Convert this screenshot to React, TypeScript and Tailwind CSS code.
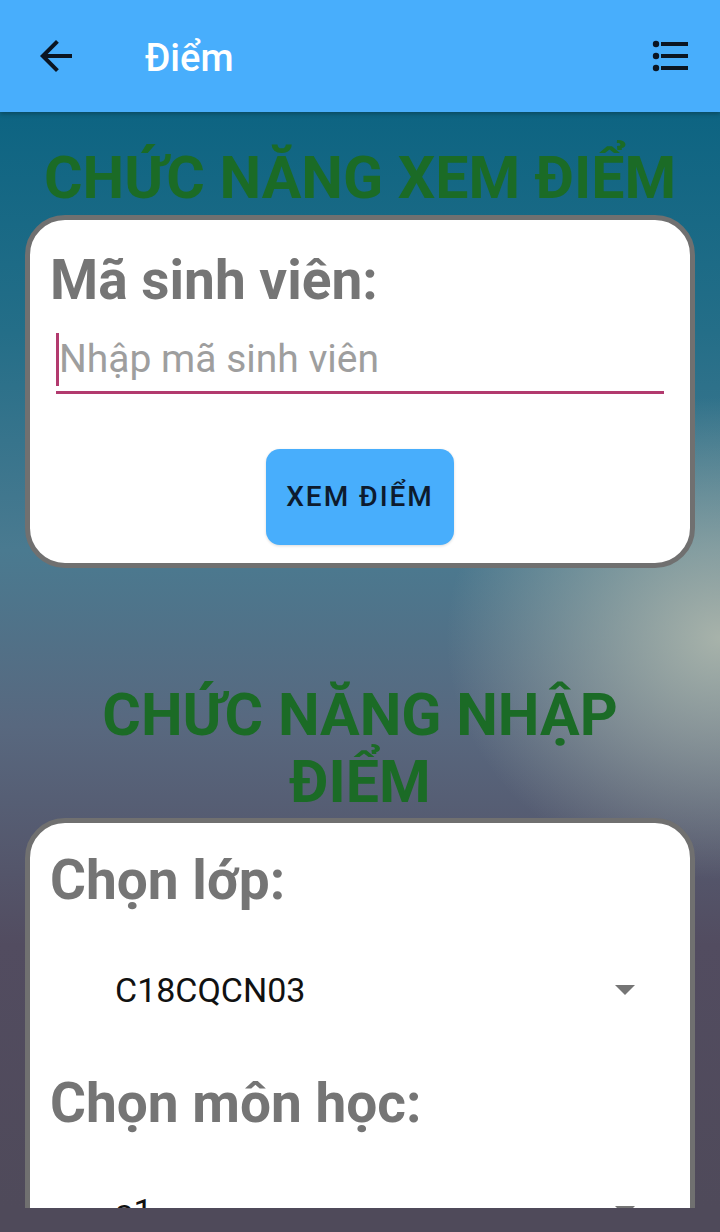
import React from "react";

function BackIcon() {
  return (
    <svg width="48" height="48" viewBox="0 0 24 24" className="text-[#0b1522]">
      <path d="M20 11H7.83l5.59-5.59L12 4l-8 8 8 8 1.41-1.41L7.83 13H20v-2z" fill="currentColor" />
    </svg>
  );
}

function ListIcon() {
  return (
    <svg width="40" height="32" viewBox="0 0 40 32" className="text-[#0b1522]">
      {[4, 16, 28].map((y) => (
        <g key={y}>
          <circle cx="6" cy={y} r="3.2" fill="currentColor" />
          <rect x="11" y={y - 2} width="27" height="4" fill="currentColor" />
        </g>
      ))}
    </svg>
  );
}

function Caret() {
  return (
    <svg width="20" height="10" viewBox="0 0 20 10">
      <path d="M0 0h20L10 10z" fill="#757575" />
    </svg>
  );
}

function SelectRow({ value }: { value: string }) {
  return (
    <div className="flex h-[80px] items-center justify-between pl-[65px] pr-[35px]">
      <span className="text-[34px] leading-none text-[#111111]">{value}</span>
      <Caret />
    </div>
  );
}

export default function App() {
  return (
    <div className="h-[1232px] w-[720px] overflow-hidden bg-[#4f4a5a] font-['Roboto',sans-serif]">
      {/* Toolbar */}
      <div className="relative z-10 flex h-[112px] items-center bg-[#48aefc] shadow-[0_2px_4px_rgba(0,0,0,0.25)]">
        <div className="ml-[32px] flex h-[48px] w-[48px] items-center justify-center">
          <BackIcon />
        </div>
        <h1 className="ml-[65px] mt-[4px] text-[38px] font-medium leading-none text-white">Điểm</h1>
        <div className="ml-auto mr-[30px]">
          <ListIcon />
        </div>
      </div>

      {/* Content */}
      <div className="h-[1096px] overflow-hidden bg-[radial-gradient(ellipse_38%_22%_at_100%_48%,rgba(172,182,172,0.95),rgba(172,182,172,0)_100%),linear-gradient(180deg,#0d6482_0%,#246e88_20%,#4a7a90_40%,#58687f_56%,#524c60_76%,#4f4a5a_100%)] px-[25px] pt-[33px]">
        <h2 className="text-center text-[59px] font-bold leading-[66px] text-[#1b6b26]">
          CHỨC NĂNG XEM ĐIỂM
        </h2>

        <div className="mt-[4px] rounded-[40px] border-[5px] border-[#707070] bg-white px-[20px] pb-[18px] pt-[28px]">
          <p className="text-[55px] font-bold leading-[64px] text-[#757575]">Mã sinh viên:</p>
          <div className="mx-[6px] mt-[21px] border-b-[3px] border-[#b23a6e] pb-[5px]">
            <div className="flex h-[53px] items-center">
              <div className="h-[53px] w-[3px] bg-[#b23a6e]" />
              <span className="text-[39px] leading-[53px] text-[#9e9e9e]">Nhập mã sinh viên</span>
            </div>
          </div>
          <div className="mt-[55px] flex justify-center">
            <button className="h-[96px] w-[188px] rounded-[14px] bg-[#48aefc] text-[28px] font-medium tracking-[0.07em] text-[#0d1b2e] shadow-[0_1px_3px_rgba(0,0,0,0.15)]">
              XEM ĐIỂM
            </button>
          </div>
        </div>

        <h2 className="mt-[113px] text-center text-[59px] font-bold leading-[67px] text-[#1b6b26]">
          CHỨC NĂNG NHẬP
          <br />
          ĐIỂM
        </h2>

        <div className="mt-[3px] rounded-[40px] border-[5px] border-[#707070] bg-white px-[20px] pt-[25px]">
          <p className="text-[55px] font-bold leading-[64px] text-[#757575]">Chọn lớp:</p>
          <div className="mt-[38px]">
            <SelectRow value="C18CQCN03" />
          </div>
          <p className="mt-[41px] text-[55px] font-bold leading-[64px] text-[#757575]">Chọn môn học:</p>
          <div className="mt-[36px]">
            <SelectRow value="a1" />
          </div>
          <div className="h-[200px]" />
        </div>
      </div>
    </div>
  );
}
